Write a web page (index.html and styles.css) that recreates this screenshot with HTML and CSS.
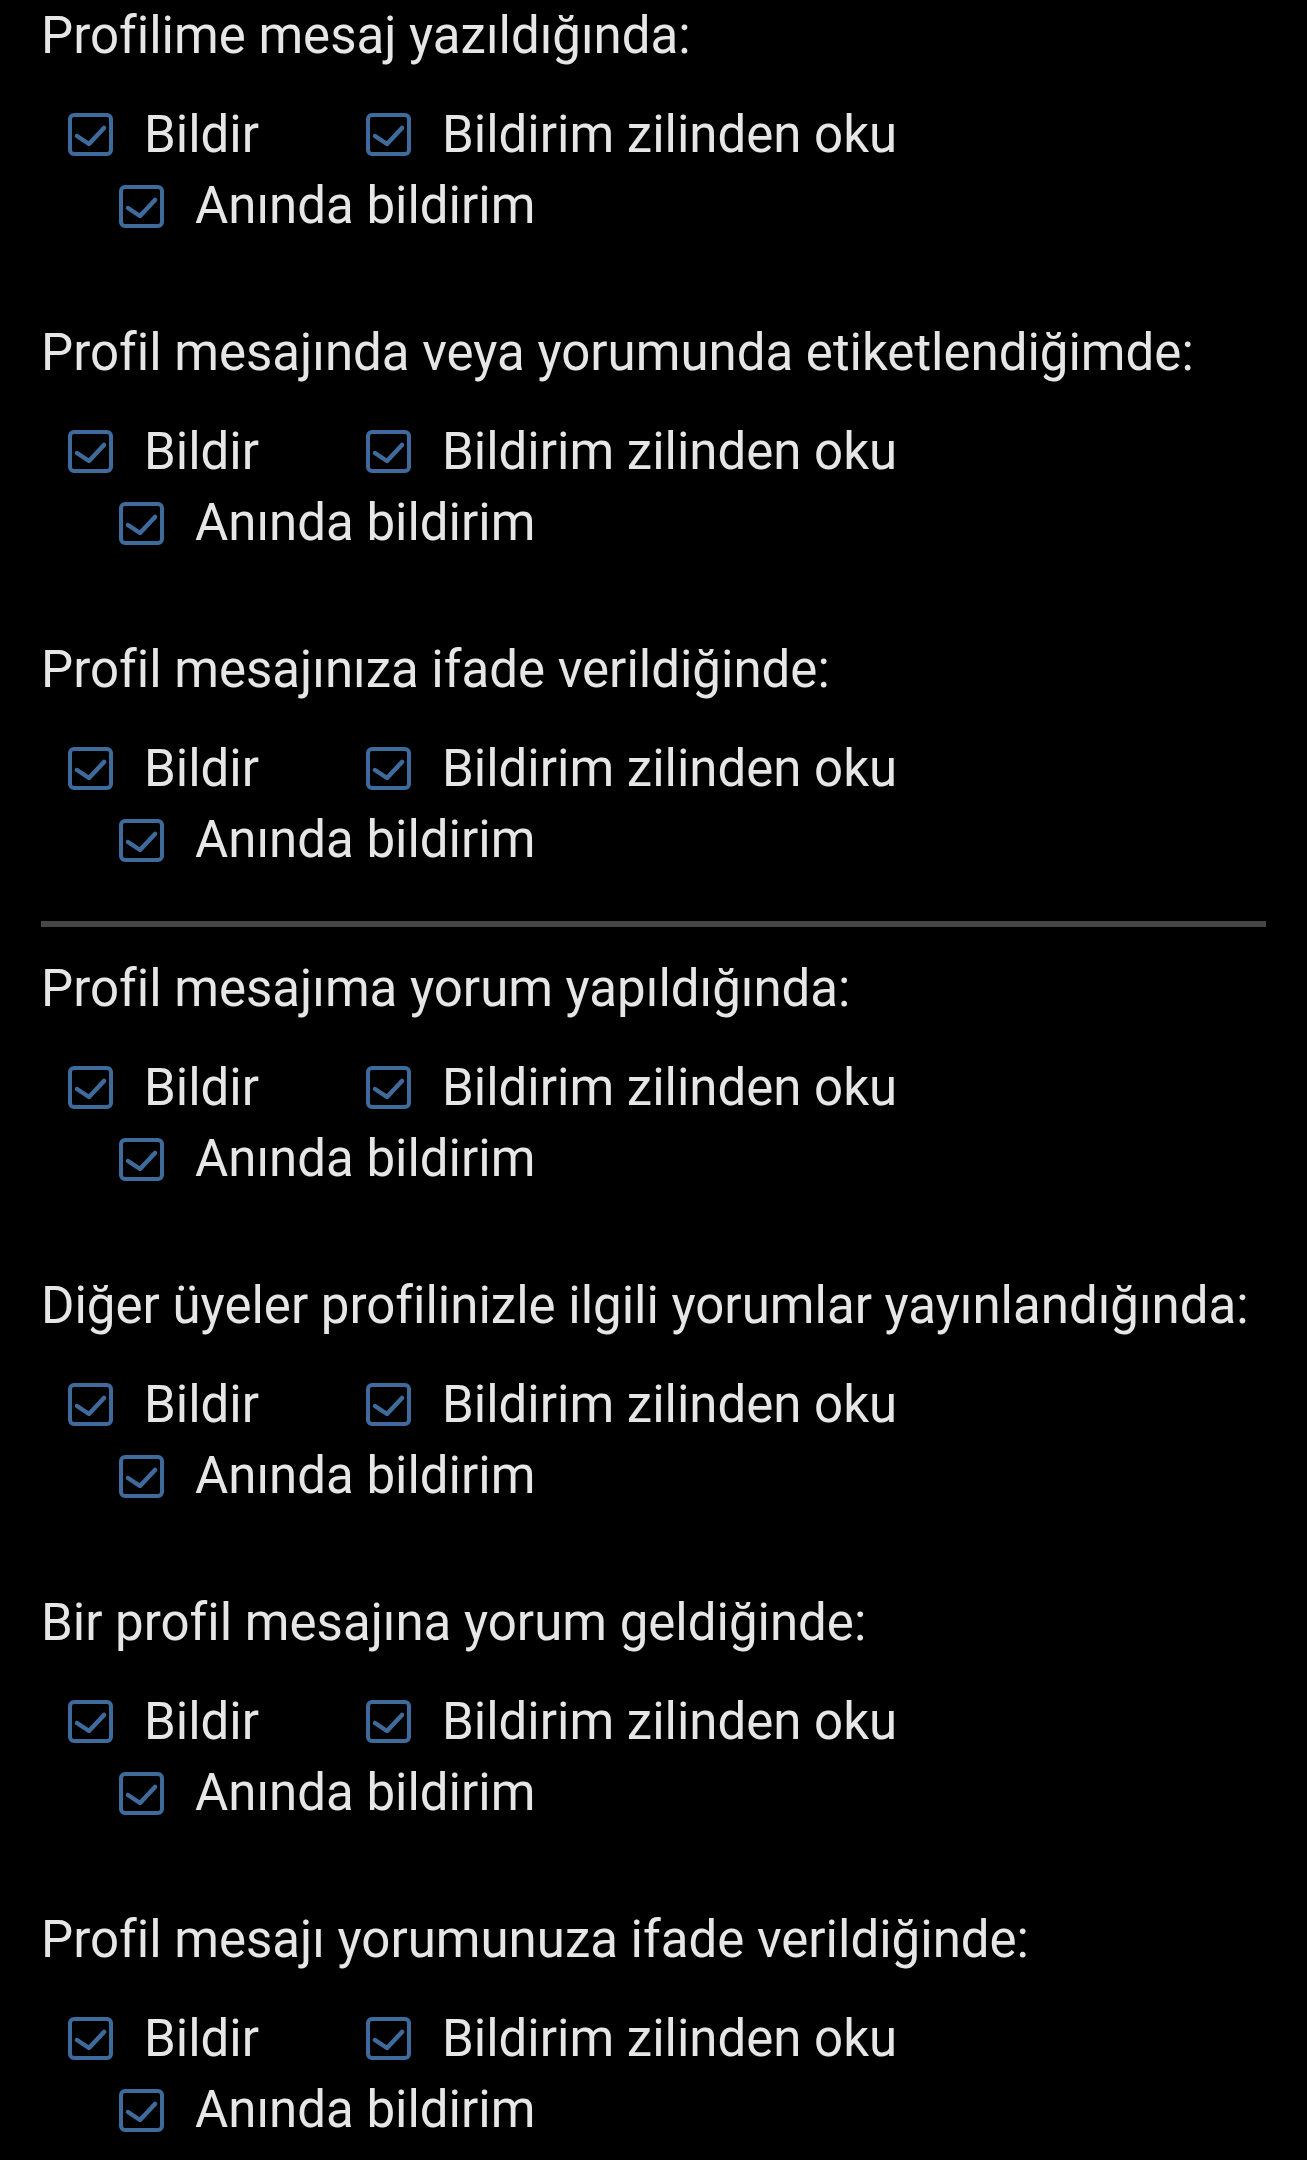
FILE: index.html
```html
<!DOCTYPE html>
<html lang="tr">
<head>
    <meta charset="UTF-8">
    <title>Bildirim ayarları</title>
    <link rel="stylesheet" href="styles.css">
</head>
<body>
    <svg class="defs" width="0" height="0">
        <symbol id="chk" viewBox="0 0 45 43">
            <rect x="2" y="2" width="41" height="39" rx="4" fill="none" stroke="#3e6b9b" stroke-width="4"/>
            <polyline points="9,23 21,31 36,15" fill="none" stroke="#3e6b9b" stroke-width="4.5" stroke-linecap="round" stroke-linejoin="round"/>
        </symbol>
    </svg>
    <div class="page">
        <div class="group">
            <h3>Profilime mesaj yazıldığında:</h3>
            <div class="opts">
                <div class="row first">
                    <label class="opt"><svg class="box"><use href="#chk"/></svg><span>Bildir</span></label>
                    <label class="opt"><svg class="box"><use href="#chk"/></svg><span>Bildirim zilinden oku</span></label>
                </div>
                <div class="row second">
                    <label class="opt"><svg class="box"><use href="#chk"/></svg><span>Anında bildirim</span></label>
                </div>
            </div>
        </div>
        <div class="group">
            <h3>Profil mesajında veya yorumunda etiketlendiğimde:</h3>
            <div class="opts">
                <div class="row first">
                    <label class="opt"><svg class="box"><use href="#chk"/></svg><span>Bildir</span></label>
                    <label class="opt"><svg class="box"><use href="#chk"/></svg><span>Bildirim zilinden oku</span></label>
                </div>
                <div class="row second">
                    <label class="opt"><svg class="box"><use href="#chk"/></svg><span>Anında bildirim</span></label>
                </div>
            </div>
        </div>
        <div class="group split">
            <h3>Profil mesajınıza ifade verildiğinde:</h3>
            <div class="opts">
                <div class="row first">
                    <label class="opt"><svg class="box"><use href="#chk"/></svg><span>Bildir</span></label>
                    <label class="opt"><svg class="box"><use href="#chk"/></svg><span>Bildirim zilinden oku</span></label>
                </div>
                <div class="row second">
                    <label class="opt"><svg class="box"><use href="#chk"/></svg><span>Anında bildirim</span></label>
                </div>
            </div>
            <div class="divider"></div>
        </div>
        <div class="group">
            <h3>Profil mesajıma yorum yapıldığında:</h3>
            <div class="opts">
                <div class="row first">
                    <label class="opt"><svg class="box"><use href="#chk"/></svg><span>Bildir</span></label>
                    <label class="opt"><svg class="box"><use href="#chk"/></svg><span>Bildirim zilinden oku</span></label>
                </div>
                <div class="row second">
                    <label class="opt"><svg class="box"><use href="#chk"/></svg><span>Anında bildirim</span></label>
                </div>
            </div>
        </div>
        <div class="group">
            <h3>Diğer üyeler profilinizle ilgili yorumlar yayınlandığında:</h3>
            <div class="opts">
                <div class="row first">
                    <label class="opt"><svg class="box"><use href="#chk"/></svg><span>Bildir</span></label>
                    <label class="opt"><svg class="box"><use href="#chk"/></svg><span>Bildirim zilinden oku</span></label>
                </div>
                <div class="row second">
                    <label class="opt"><svg class="box"><use href="#chk"/></svg><span>Anında bildirim</span></label>
                </div>
            </div>
        </div>
        <div class="group">
            <h3>Bir profil mesajına yorum geldiğinde:</h3>
            <div class="opts">
                <div class="row first">
                    <label class="opt"><svg class="box"><use href="#chk"/></svg><span>Bildir</span></label>
                    <label class="opt"><svg class="box"><use href="#chk"/></svg><span>Bildirim zilinden oku</span></label>
                </div>
                <div class="row second">
                    <label class="opt"><svg class="box"><use href="#chk"/></svg><span>Anında bildirim</span></label>
                </div>
            </div>
        </div>
        <div class="group">
            <h3>Profil mesajı yorumunuza ifade verildiğinde:</h3>
            <div class="opts">
                <div class="row first">
                    <label class="opt"><svg class="box"><use href="#chk"/></svg><span>Bildir</span></label>
                    <label class="opt"><svg class="box"><use href="#chk"/></svg><span>Bildirim zilinden oku</span></label>
                </div>
                <div class="row second">
                    <label class="opt"><svg class="box"><use href="#chk"/></svg><span>Anında bildirim</span></label>
                </div>
            </div>
        </div>
    </div>
</body>
</html>
```
FILE: styles.css
```css
body { margin: 0; background: #000; color: #e6e6e6; font-family: Roboto, "Noto Sans", sans-serif; font-size: 51px; }
.defs { position: absolute; }
.page { padding: 0 41px; }
.group { padding-bottom: 75px; }
.group h3 { margin: 0; padding-top: 1px; font-size: 51px; font-weight: 400; line-height: 70px; white-space: nowrap; }
.opts { margin-top: 29px; }
.row { display: flex; align-items: center; height: 72px; line-height: 72px; white-space: nowrap; }
.row.first { padding-left: 27px; height: 69px; line-height: 69px; }
.row.second { padding-left: 78px; margin-top: 1px; }
.opt { display: flex; align-items: center; gap: 31px; }
.opt + .opt { margin-left: 107px; }
.box { width: 45px; height: 43px; flex: none; }
.group.split { padding-bottom: 0; }
.divider { height: 6px; background: #464646; margin: 45px 0 26px; }
```
